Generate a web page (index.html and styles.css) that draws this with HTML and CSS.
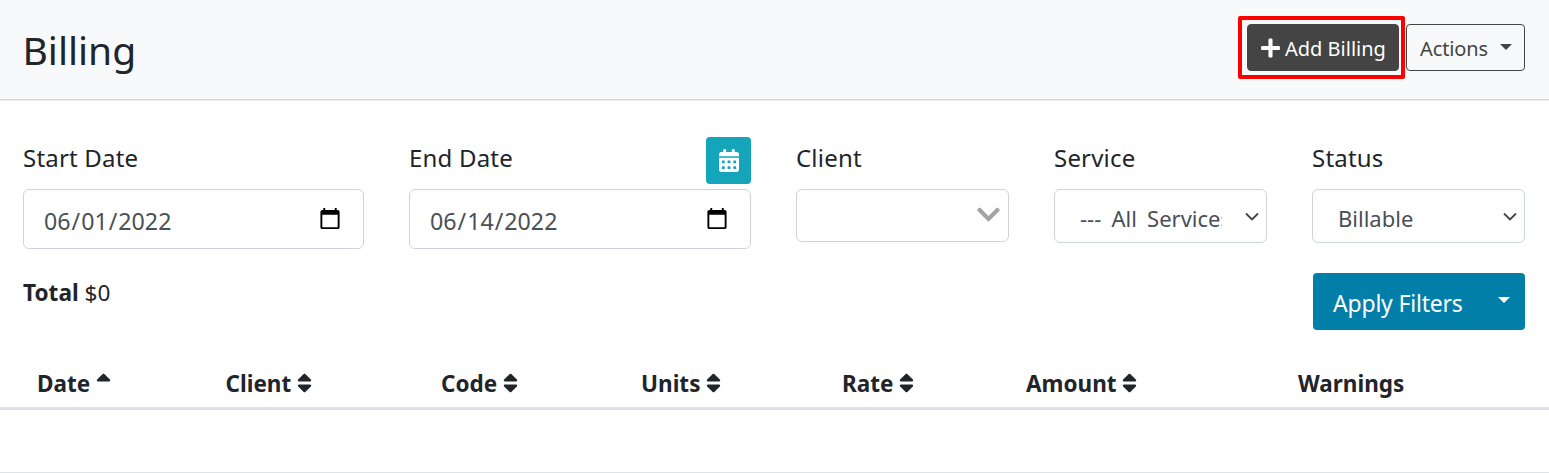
FILE: index.html
```html
<!DOCTYPE html>
<html lang="en">
<head>
<meta charset="utf-8">
<title>Billing</title>
<link rel="stylesheet" href="styles.css">
</head>
<body>
<header class="page-header">
  <h1 class="page-title">Billing</h1>
  <div class="header-actions">
    <button class="btn btn-dark" type="button">
      <svg class="icon-plus" viewBox="0 0 448 512"><path d="M416 208H272V64c0-17.67-14.33-32-32-32h-32c-17.67 0-32 14.33-32 32v144H32c-17.67 0-32 14.33-32 32v32c0 17.67 14.33 32 32 32h144v144c0 17.67 14.33 32 32 32h32c17.67 0 32-14.33 32-32V304h144c17.67 0 32-14.33 32-32v-32c0-17.67-14.33-32-32-32z"/></svg>
      <span>Add Billing</span>
    </button>
    <button class="btn btn-outline" type="button"><span>Actions</span><i class="caret"></i></button>
  </div>
</header>

<main class="content">
  <form class="filters">
    <div class="field">
      <label class="field-label">Start Date</label>
      <input class="control control-date" type="date" value="2022-06-01">
    </div>
    <div class="field">
      <div class="label-row">
        <label class="field-label">End Date</label>
        <button class="btn-calendar" type="button" aria-label="Calendar">
          <svg viewBox="0 0 448 512"><path d="M0 464c0 26.5 21.5 48 48 48h352c26.5 0 48-21.5 48-48V192H0v272zm320-196c0-6.6 5.4-12 12-12h40c6.6 0 12 5.4 12 12v40c0 6.6-5.4 12-12 12h-40c-6.6 0-12-5.4-12-12v-40zm0 128c0-6.6 5.4-12 12-12h40c6.6 0 12 5.4 12 12v40c0 6.6-5.4 12-12 12h-40c-6.6 0-12-5.4-12-12v-40zM192 268c0-6.6 5.4-12 12-12h40c6.6 0 12 5.4 12 12v40c0 6.6-5.4 12-12 12h-40c-6.6 0-12-5.4-12-12v-40zm0 128c0-6.6 5.4-12 12-12h40c6.6 0 12 5.4 12 12v40c0 6.6-5.4 12-12 12h-40c-6.6 0-12-5.4-12-12v-40zM64 268c0-6.6 5.4-12 12-12h40c6.6 0 12 5.4 12 12v40c0 6.6-5.4 12-12 12H76c-6.6 0-12-5.4-12-12v-40zm0 128c0-6.6 5.4-12 12-12h40c6.6 0 12 5.4 12 12v40c0 6.6-5.4 12-12 12H76c-6.6 0-12-5.4-12-12v-40zM400 64h-48V16c0-8.8-7.2-16-16-16h-32c-8.8 0-16 7.2-16 16v48H160V16c0-8.8-7.2-16-16-16h-32c-8.8 0-16 7.2-16 16v48H48C21.5 64 0 85.5 0 112v48h448v-48c0-26.5-21.5-48-48-48z"/></svg>
        </button>
      </div>
      <input class="control control-date" type="date" value="2022-06-14">
    </div>
    <div class="field">
      <label class="field-label">Client</label>
      <div class="control control-combo">
        <svg viewBox="0 0 448 512"><path d="M207.029 381.476L12.686 187.132c-9.373-9.373-9.373-24.569 0-33.941l22.667-22.667c9.357-9.357 24.522-9.375 33.901-.04L224 284.505l154.745-154.021c9.379-9.335 24.544-9.317 33.901.04l22.667 22.667c9.373 9.373 9.373 24.569 0 33.941L240.971 381.476c-9.373 9.372-24.569 9.372-33.942 0z"/></svg>
      </div>
    </div>
    <div class="field">
      <label class="field-label">Service</label>
      <select class="control control-select control-select-wide"><option>--- All Services ---</option></select>
    </div>
    <div class="field">
      <label class="field-label">Status</label>
      <select class="control control-select"><option>Billable</option></select>
    </div>
  </form>

  <div class="summary-row">
    <div class="total"><strong>Total</strong> $0</div>
    <button class="btn-apply" type="button"><span>Apply Filters</span><i class="caret caret-large"></i></button>
  </div>
</main>

<table class="billing-table">
  <thead>
    <tr>
      <th>Date <svg class="sort" viewBox="0 0 320 512"><path d="M296 183L177 64c-9.4-9.4-24.6-9.4-33.9 0L24 183c-15.1 15.1-4.4 41 17 41h238c21.4 0 32.1-25.9 17-41z"/></svg></th>
      <th>Client <svg class="sort" viewBox="0 0 320 512"><path d="M41 288h238c21.4 0 32.1 25.9 17 41L177 448c-9.4 9.4-24.6 9.4-33.9 0L24 329c-15.1-15.1-4.4-41 17-41zm255-105L177 64c-9.4-9.4-24.6-9.4-33.9 0L24 183c-15.1 15.1-4.4 41 17 41h238c21.4 0 32.1-25.9 17-41z"/></svg></th>
      <th>Code <svg class="sort" viewBox="0 0 320 512"><path d="M41 288h238c21.4 0 32.1 25.9 17 41L177 448c-9.4 9.4-24.6 9.4-33.9 0L24 329c-15.1-15.1-4.4-41 17-41zm255-105L177 64c-9.4-9.4-24.6-9.4-33.9 0L24 183c-15.1 15.1-4.4 41 17 41h238c21.4 0 32.1-25.9 17-41z"/></svg></th>
      <th>Units <svg class="sort" viewBox="0 0 320 512"><path d="M41 288h238c21.4 0 32.1 25.9 17 41L177 448c-9.4 9.4-24.6 9.4-33.9 0L24 329c-15.1-15.1-4.4-41 17-41zm255-105L177 64c-9.4-9.4-24.6-9.4-33.9 0L24 183c-15.1 15.1-4.4 41 17 41h238c21.4 0 32.1-25.9 17-41z"/></svg></th>
      <th>Rate <svg class="sort" viewBox="0 0 320 512"><path d="M41 288h238c21.4 0 32.1 25.9 17 41L177 448c-9.4 9.4-24.6 9.4-33.9 0L24 329c-15.1-15.1-4.4-41 17-41zm255-105L177 64c-9.4-9.4-24.6-9.4-33.9 0L24 183c-15.1 15.1-4.4 41 17 41h238c21.4 0 32.1-25.9 17-41z"/></svg></th>
      <th>Amount <svg class="sort" viewBox="0 0 320 512"><path d="M41 288h238c21.4 0 32.1 25.9 17 41L177 448c-9.4 9.4-24.6 9.4-33.9 0L24 329c-15.1-15.1-4.4-41 17-41zm255-105L177 64c-9.4-9.4-24.6-9.4-33.9 0L24 183c-15.1 15.1-4.4 41 17 41h238c21.4 0 32.1-25.9 17-41z"/></svg></th>
      <th>Warnings</th>
    </tr>
  </thead>
  <tbody>
    <tr><td colspan="7"></td></tr>
  </tbody>
</table>
</body>
</html>
```

FILE: styles.css
```css
* { box-sizing: border-box; }
html, body { margin: 0; padding: 0; }
body {
  height: 473px;
  overflow: hidden;
  background: #fff;
  color: #212529;
  font-family: "Noto Sans", "Open Sans", sans-serif;
  font-size: 22px;
  line-height: 1.5;
}
.page-header {
  height: 100px;
  display: flex;
  align-items: flex-start;
  justify-content: space-between;
  padding: 24px 24px 0 22.5px;
  background: #f8f9fa;
  border-bottom: 1px solid #d5d6d8;
  box-shadow: 0 1px 1px rgba(0,0,0,.06);
}
.page-title {
  margin: 0;
  font-size: 39px;
  font-weight: 400;
  line-height: 52px;
}
.header-actions { display: flex; gap: 7px; }
.btn {
  display: flex;
  align-items: center;
  height: 47px;
  border-radius: 4px;
  font: inherit;
  font-size: 20px;
  padding: 2px 0 0;
}
.btn-dark {
  position: relative;
  width: 152px;
  padding-left: 13px;
  gap: 5px;
  background: #444;
  border: 1px solid #444;
  color: #fff;
}
.btn-dark::after {
  content: "";
  position: absolute;
  left: -10px;
  right: -7px;
  top: -9px;
  bottom: -9px;
  border: 4px solid #f00;
  border-radius: 2px;
  pointer-events: none;
}
.icon-plus { width: 19px; height: 22px; fill: #fff; margin-top: -2px; }
.btn-outline {
  width: 119px;
  padding-left: 13px;
  background: transparent;
  border: 1px solid #444;
  color: #444;
  letter-spacing: -0.1px;
}
.caret {
  display: inline-block;
  margin-left: 12px;
  border-top: 6px solid currentColor;
  border-left: 6px solid transparent;
  border-right: 6px solid transparent;
  margin-top: -4px;
}
.content { padding: 0 24px 0 23px; }
.filters {
  display: grid;
  grid-template-columns: 341fr 342fr 213fr 213fr 213fr;
  column-gap: 45px;
  height: 173px;
  align-items: start;
}
.field { display: flex; flex-direction: column; }
.field-label {
  display: block;
  padding-top: 40px;
  height: 89px;
  font-size: 24px;
  line-height: 36px;
  letter-spacing: 0.2px;
}
.label-row { display: flex; justify-content: space-between; align-items: flex-start; }
.btn-calendar {
  width: 45px;
  height: 47px;
  margin-top: 37px;
  padding: 0;
  display: flex;
  align-items: center;
  justify-content: center;
  background: #14a5bb;
  border: none;
  border-radius: 4px;
}
.btn-calendar svg { width: 20px; height: 23px; fill: #fff; }
.control {
  width: 100%;
  background: #fff;
  border: 1px solid #ced4da;
  border-radius: 6px;
  color: #495057;
  font-family: inherit;
  font-size: 23.2px;
}
.control-date { height: 60px; padding: 3px 19px 0 19px; }
.control-date::-webkit-calendar-picker-indicator { width: 24px; height: 24px; margin-top: -4px; }
.control-combo {
  height: 53px;
  display: flex;
  align-items: center;
  justify-content: flex-end;
  padding-right: 8px;
}
.control-combo svg { width: 23px; height: 27px; fill: #a3a3a3; margin-top: -2px; }
.control-select {
  height: 54px;
  padding: 3px 44px 0 25px;
  font-size: 22px;
  appearance: none;
  -webkit-appearance: none;
  background-image: url("data:image/svg+xml,%3Csvg xmlns='http://www.w3.org/2000/svg' viewBox='0 0 14 9'%3E%3Cpath d='M1 1.5l6 6 6-6' fill='none' stroke='%23444' stroke-width='1.8'/%3E%3C/svg%3E");
  background-repeat: no-repeat;
  background-position: right 7px top 22px;
  background-size: 14px 9px;
}
.control-select-wide { word-spacing: 4.5px; }
.summary-row {
  display: flex;
  justify-content: space-between;
  align-items: flex-start;
  height: 87px;
}
.total { margin-top: 3px; font-size: 22.6px; line-height: 34px; }
.total strong { font-weight: 700; }
.btn-apply {
  display: flex;
  align-items: center;
  width: 212px;
  height: 57px;
  margin-left: auto;
  padding: 4px 0 0 20px;
  background: #027fa9;
  border: none;
  border-radius: 4px;
  color: #fff;
  font: inherit;
  font-size: 23px;
  letter-spacing: -0.2px;
}
.caret-large {
  margin-left: auto;
  margin-right: 15.5px;
  margin-top: -8px;
  border-left-width: 6.5px;
  border-right-width: 6.5px;
}
.billing-table {
  width: 100%;
  table-layout: fixed;
  border-collapse: collapse;
}
.billing-table th {
  height: 48px;
  padding: 2px 0 0;
  text-align: left;
  font-size: 22.5px;
  font-weight: 700;
  line-height: 30px;
  border-bottom: 3px solid #dee2e6;
}
.billing-table th:nth-child(1) { width: 225.5px; padding-left: 37px; }
.billing-table th:nth-child(2) { width: 215.5px; }
.billing-table th:nth-child(3) { width: 200px; }
.billing-table th:nth-child(4) { width: 201px; }
.billing-table th:nth-child(5) { width: 184px; }
.billing-table th:nth-child(6) { width: 272px; }
.billing-table td { height: 64px; padding: 0; border-bottom: 1px solid #dee2e6; }
.sort { width: 15px; height: 24px; fill: #212529; vertical-align: -3px; }
```
